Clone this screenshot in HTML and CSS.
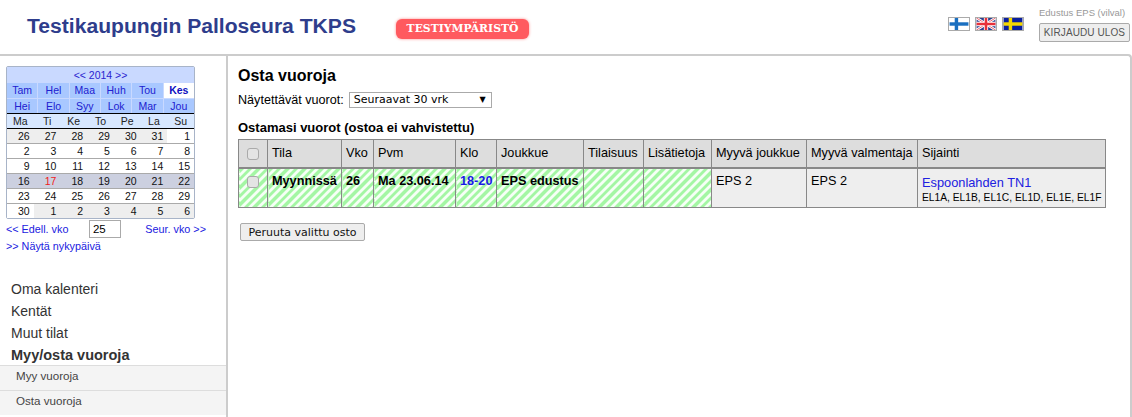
FILE: index.html
```html
<!DOCTYPE html>
<html lang="fi">
<head>
<meta charset="utf-8">
<title>Osta vuoroja</title>
<link rel="stylesheet" href="styles.css">
</head>
<body>
<header class="top">
  <h1 class="club">Testikaupungin Palloseura TKPS</h1>
  <span class="env">TESTIYMPÄRISTÖ</span>
  <div class="flags">
    <svg class="flag" viewBox="0 0 22 14"><rect width="22" height="14" fill="#fff"/><rect x="6" width="4" height="14" fill="#1a6fc0"/><rect y="5" width="22" height="4" fill="#1a6fc0"/></svg>
    <svg class="flag" viewBox="0 0 22 14"><rect width="22" height="14" fill="#2c3f8f"/><path d="M0 0L22 14M22 0L0 14" stroke="#fff" stroke-width="3"/><path d="M0 0L22 14M22 0L0 14" stroke="#e8505a" stroke-width="1"/><path d="M11 0V14M0 7H22" stroke="#fff" stroke-width="5"/><path d="M11 0V14M0 7H22" stroke="#e8303a" stroke-width="3"/></svg>
    <svg class="flag" viewBox="0 0 22 14"><rect width="22" height="14" fill="#0a1f9c"/><rect x="6" width="4" height="14" fill="#f5d800"/><rect y="5" width="22" height="4" fill="#f5d800"/></svg>
  </div>
  <div class="user">
    <span class="user-name">Edustus EPS (vilval)</span>
    <button class="logout">KIRJAUDU ULOS</button>
  </div>
</header>
<div class="page">
  <aside class="side">
    <div class="cal">
      <div class="cal-year">&lt;&lt; 2014 &gt;&gt;</div>
      <div class="cal-months">
        <span>Tam</span><span>Hel</span><span>Maa</span><span>Huh</span><span>Tou</span><span class="now">Kes</span>
        <span>Hei</span><span>Elo</span><span>Syy</span><span>Lok</span><span>Mar</span><span>Jou</span>
      </div>
      <div class="cal-days"><span>Ma</span><span>Ti</span><span>Ke</span><span>To</span><span>Pe</span><span>La</span><span>Su</span></div>
      <div class="week"><span class="off">26</span><span class="off">27</span><span class="off">28</span><span class="off">29</span><span class="off">30</span><span class="off">31</span><span>1</span></div>
      <div class="week"><span>2</span><span>3</span><span>4</span><span>5</span><span>6</span><span>7</span><span>8</span></div>
      <div class="week"><span>9</span><span>10</span><span>11</span><span>12</span><span>13</span><span>14</span><span>15</span></div>
      <div class="week current"><span>16</span><span class="today">17</span><span>18</span><span>19</span><span>20</span><span>21</span><span>22</span></div>
      <div class="week"><span>23</span><span>24</span><span>25</span><span>26</span><span>27</span><span>28</span><span>29</span></div>
      <div class="week last"><span>30</span><span class="off">1</span><span class="off">2</span><span class="off">3</span><span class="off">4</span><span class="off">5</span><span class="off">6</span></div>
    </div>
    <div class="cal-nav">
      <a class="link" href="#">&lt;&lt; Edell. vko</a>
      <input class="week-input" type="text" value="25">
      <a class="link" href="#">Seur. vko &gt;&gt;</a>
    </div>
    <a class="link today-link" href="#">&gt;&gt; Näytä nykypäivä</a>
    <nav class="menu">
      <a href="#">Oma kalenteri</a>
      <a href="#">Kentät</a>
      <a href="#">Muut tilat</a>
      <a href="#" class="active">Myy/osta vuoroja</a>
    </nav>
    <nav class="submenu">
      <a href="#">Myy vuoroja</a>
      <a href="#">Osta vuoroja</a>
    </nav>
  </aside>
  <main class="main">
    <h2 class="title">Osta vuoroja</h2>
    <div class="filter">
      <label>Näytettävät vuorot:</label>
      <div class="select"><span>Seuraavat 30 vrk</span><span class="arrow">▼</span></div>
    </div>
    <h3 class="sub">Ostamasi vuorot (ostoa ei vahvistettu)</h3>
    <table class="shifts">
      <colgroup>
        <col class="c1"><col class="c2"><col class="c3"><col class="c4"><col class="c5"><col class="c6"><col class="c7"><col class="c8"><col class="c9"><col class="c10"><col class="c11">
      </colgroup>
      <thead>
        <tr>
          <th class="chk"><span class="box"></span></th>
          <th>Tila</th><th>Vko</th><th>Pvm</th><th>Klo</th><th>Joukkue</th><th>Tilaisuus</th><th>Lisätietoja</th><th>Myyvä joukkue</th><th>Myyvä valmentaja</th><th>Sijainti</th>
        </tr>
      </thead>
      <tbody>
        <tr>
          <td class="chk st"><span class="box"></span></td>
          <td class="st b">Myynnissä</td>
          <td class="st b">26</td>
          <td class="st b">Ma 23.06.14</td>
          <td class="st b blue">18-20</td>
          <td class="st b">EPS edustus</td>
          <td class="st"></td>
          <td class="st"></td>
          <td>EPS 2</td>
          <td>EPS 2</td>
          <td><a class="place" href="#">Espoonlahden TN1</a><div class="fields">EL1A, EL1B, EL1C, EL1D, EL1E, EL1F</div></td>
        </tr>
      </tbody>
    </table>
    <button class="cancel">Peruuta valittu osto</button>
  </main>
</div>
</body>
</html>
```
FILE: styles.css
```css
* { box-sizing: border-box; }
html, body { margin: 0; padding: 0; height: 100%; overflow: hidden; }
body { width: 1132px; height: 417px; background: #fff; font-family: "Liberation Sans", Arial, sans-serif; color: #000; font-size: 12px; }
a { text-decoration: none; }

.top { height: 54px; display: flex; position: relative; }
.club { margin: 14px 0 0 27px; font-size: 21.1px; line-height: 24px; font-weight: bold; color: #2e3d8c; width: 369px; white-space: nowrap; }
.env { margin-top: 19px; height: 20px; width: 133px; border-radius: 6px; background: #ff5a5f; box-shadow: 0 0 3px #ff8a8a; color: #fff; font-family: "DejaVu Serif", serif; font-weight: bold; font-size: 10.8px; line-height: 19px; text-align: center; white-space: nowrap; }
.flags { margin: 17px 0 0 419px; display: flex; gap: 5px; }
.flag { width: 22px; height: 14px; border: 1px solid #aaa; display: block; }
.user { margin: 0 0 0 15px; width: 92px; display: flex; flex-direction: column; }
.user-name { margin-top: 7px; font-size: 9.5px; line-height: 11px; color: #999; white-space: nowrap; }
.logout { margin: 5px 0 0 0; width: 91px; height: 19px; padding: 0; border: 1px solid #aaa; border-radius: 2px; background: #eee; color: #555; font-family: "Liberation Sans", sans-serif; font-size: 10px; letter-spacing: 0.1px; white-space: nowrap; }

.page { display: flex; height: 363px; border-top: 2px solid #ccc; border-right: 2px solid #ccc; border-top-right-radius: 4px; }
.side { width: 228px; flex: none; border-right: 2px solid #ccc; padding-top: 10px; }

.cal { margin-left: 6px; width: 189px; border: 1px solid #a8b4c8; border-radius: 2px; font-size: 10.5px; }
.cal-year { height: 16px; background: #c9d9ff; color: #2a1fd0; text-align: center; line-height: 16px; font-size: 10.5px; }
.cal-months { display: grid; grid-template-columns: repeat(6, 1fr); background: #c9d9ff; gap: 1px 1px; height: 30px; }
.cal-months span { background: #a9c8ff; color: #2020d0; text-align: center; line-height: 14px; }
.cal-months .now { background: #fff; color: #1010c0; font-weight: bold; }
.cal-days { display: grid; grid-template-columns: repeat(7, 1fr); height: 16px; background: #d8e8ff; border-top: 1px solid #000; border-bottom: 1px solid #000; line-height: 14px; }
.cal-days span { text-align: center; color: #222; }
.week { display: grid; grid-template-columns: repeat(7, 1fr); height: 15px; border-bottom: 1px solid #aaa; line-height: 14px; background: #fff; }
.week.last { border-bottom: 0; height: 14px; }
.week span { text-align: right; padding-right: 4px; color: #111; }
.week .off { background: #eee; }
.week.current { background: #ccd0e0; }
.week .today { color: #f02020; }

.cal-nav { margin: 1px 0 0 6px; width: 200px; height: 18px; display: flex; justify-content: space-between; align-items: center; }
.link { color: #2020e0; font-size: 10.8px; }
.week-input { width: 32px; height: 18px; margin: 0 2px 0 -2px; padding: 0 3px; border: 1px solid #aaa; font: 11.5px "Liberation Sans", sans-serif; }
.today-link { display: block; margin: 2px 0 0 6px; line-height: 12px; }

.menu { margin-top: 26px; padding-left: 11px; display: flex; flex-direction: column; }
.menu a { height: 22px; line-height: 22px; font-size: 14px; color: #333; }
.menu .active { font-weight: bold; height: 21px; font-size: 14.5px; }
.submenu a { display: block; height: 25px; line-height: 19px; padding-left: 16px; background: #f4f4f4; border-top: 1px solid #ddd; color: #444; font-size: 11.6px; }

.main { padding: 10px 0 0 10px; flex: 1; }
.title { margin: 0; font-size: 16px; line-height: 20px; font-weight: bold; }
.filter { margin-top: 6px; display: flex; align-items: center; gap: 5px; font-size: 12.6px; height: 16px; }
.select { width: 143px; height: 16px; border: 1px solid #aaa; display: flex; justify-content: space-between; padding: 0 5px 0 4px; font-family: "DejaVu Sans", sans-serif; font-size: 11px; line-height: 14px; }
.arrow { font-size: 8px; }
.sub { margin: 13px 0 0; font-size: 13px; line-height: 14px; font-weight: bold; height: 18px; }

.shifts { border-collapse: collapse; table-layout: fixed; width: 867px; border: 1px solid #888; font-size: 12.7px; }
.c1 { width: 29px; } .c2 { width: 74px; } .c3 { width: 32px; } .c4 { width: 82px; } .c5 { width: 41px; } .c6 { width: 87px; } .c7 { width: 60px; } .c8 { width: 68px; } .c9 { width: 95px; } .c10 { width: 111px; } .c11 { width: 188px; }
.shifts th { height: 28px; background: #ddd; border: 1px solid #888; border-bottom: 2px solid #888; font-weight: normal; text-align: left; padding: 0 4px; white-space: nowrap; }
.shifts td { height: 40px; background: #eee; border: 1px solid #888; vertical-align: top; padding: 5px 4px 0; white-space: nowrap; }
.shifts td.st { background: repeating-linear-gradient(135deg, #a4f6a4 0 3px, #f6fff6 3px 6px); }
.b { font-weight: bold; }
.blue { color: #1a1ae6; }
.shifts th.chk, .shifts td.chk { padding: 0; text-align: center; }
.shifts td.chk { padding-top: 6px; }
.box { display: inline-block; width: 12px; height: 12px; border: 1px solid #aaa; border-radius: 3px; background: #e4e4e4; vertical-align: middle; }
.place { color: #2020e0; line-height: 17px; display: block; font-size: 12.8px; }
.fields { font-size: 10.25px; line-height: 14px; }
.cancel { display: block; margin: 15px 0 0 2px; width: 125px; height: 18px; padding: 0; border: 1px solid #aaa; border-radius: 2px; background: #eee; font-family: "DejaVu Sans", sans-serif; font-size: 11px; color: #111; white-space: nowrap; }
```
